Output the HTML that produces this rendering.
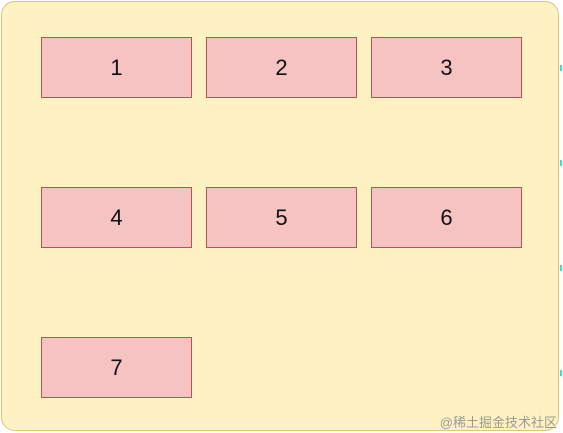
<!DOCTYPE html>
<html><head><style>
html,body{margin:0;padding:0;width:563px;height:433px;background:#fff;overflow:hidden;font-family:"Liberation Sans",Arial,sans-serif;}
.c{position:absolute;left:1px;top:1px;width:556px;height:428px;background:#fff2c2;border:1px solid #dcc77a;border-radius:14px;}
.b{position:absolute;width:151px;height:61px;background:#f6c3c3;border:1px solid #b85450;box-sizing:border-box;display:flex;align-items:center;justify-content:center;font-size:22px;color:#111;}
.wm{position:absolute;right:6px;bottom:2px;font-size:13px;color:#9a9a94;font-family:"Liberation Sans","Noto Sans CJK SC",sans-serif;}
.m{position:absolute;left:560px;width:2px;height:6px;background:#2ee6d6;}
</style></head><body>
<div class="c"></div>
<div class="b" style="left:41px;top:37px">1</div>
<div class="b" style="left:206px;top:37px">2</div>
<div class="b" style="left:371px;top:37px">3</div>
<div class="b" style="left:41px;top:187px">4</div>
<div class="b" style="left:206px;top:187px">5</div>
<div class="b" style="left:371px;top:187px">6</div>
<div class="b" style="left:41px;top:337px">7</div>
<div class="m" style="top:65px"></div>
<div class="m" style="top:160px"></div>
<div class="m" style="top:265px"></div>
<div class="m" style="top:370px"></div>
<div class="wm">@稀土掘金技术社区</div>
</body></html>
